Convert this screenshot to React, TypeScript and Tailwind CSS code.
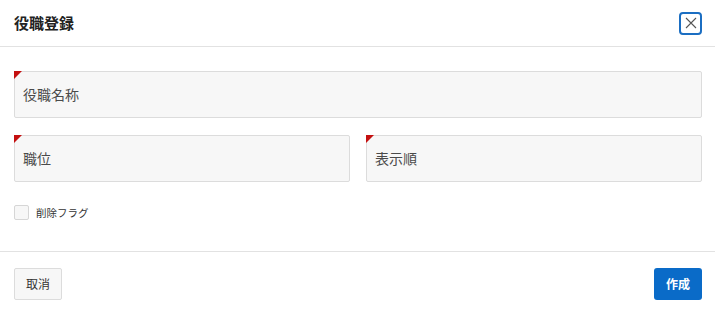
import { useState } from "react";

const font = { fontFamily: '"Noto Sans CJK JP", "Noto Sans", sans-serif' };

function RequiredField({ label, className = "" }: { label: string; className?: string }) {
  return (
    <div
      className={`relative h-[47px] rounded-[2px] border border-[#dcdcdc] bg-[#f7f7f7] flex items-center pl-[8px] pr-2 ${className}`}
    >
      {/* 必須マーカー */}
      <span className="absolute -left-px -top-px h-0 w-0 border-t-[8px] border-r-[8px] border-t-[#c41010] border-r-transparent" />
      <input
        placeholder={label}
        className="w-full bg-transparent text-[14px] text-[#333] placeholder:text-[#4a4a4a] outline-none"
      />
    </div>
  );
}

export default function App() {
  const [deleted, setDeleted] = useState(false);

  return (
    <div className="w-[715px] h-[313px] bg-white flex flex-col" style={font}>
      <header className="h-[47px] border-b border-[#e2e2e2] flex items-center justify-between pl-[14px] pr-[13px]">
        <h1 className="text-[15px] font-bold text-[#222]">役職登録</h1>
        <button
          type="button"
          aria-label="閉じる"
          className="h-[23px] w-[23px] rounded-[4px] border-2 border-[#1b6ec2] flex items-center justify-center"
        >
          <svg width="12" height="12" viewBox="0 0 12 12" stroke="#555" strokeWidth="1.1">
            <path d="M1 1 L11 11 M11 1 L1 11" />
          </svg>
        </button>
      </header>

      <div className="flex-1 px-[14px] pr-[13px] pt-[24px] flex flex-col">
        <RequiredField label="役職名称" />
        <div className="mt-[17px] grid grid-cols-2 gap-[16px]">
          <RequiredField label="職位" />
          <RequiredField label="表示順" />
        </div>
        <label className="mt-[23px] flex items-center gap-[7px] text-[10.5px] text-[#333] cursor-pointer">
          <span
            className={`h-[15px] w-[15px] rounded-[2px] border border-[#d6d6d6] ${
              deleted ? "bg-[#1b6ec2]" : "bg-[#f7f7f7]"
            }`}
          />
          <input
            type="checkbox"
            className="hidden"
            checked={deleted}
            onChange={(e) => setDeleted(e.target.checked)}
          />
          削除フラグ
        </label>
      </div>

      <footer className="h-[62px] border-t border-[#e2e2e2] flex items-start justify-between pl-[14px] pr-[13px] pt-[16px]">
        <button
          type="button"
          className="h-[32px] w-[48px] rounded-[2px] border border-[#dcdcdc] bg-[#f7f7f7] text-[12px] text-[#333]"
        >
          取消
        </button>
        <button
          type="button"
          className="h-[32px] w-[48px] rounded-[3px] bg-[#0a6bc8] text-[12px] font-bold text-white"
        >
          作成
        </button>
      </footer>
    </div>
  );
}
